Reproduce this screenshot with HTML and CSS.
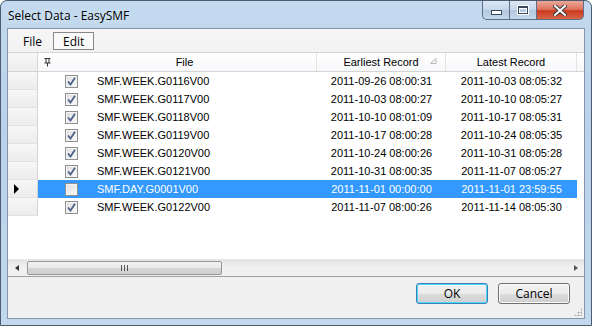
FILE: index.html
```html
<!DOCTYPE html>
<html lang="en">
<head>
    <meta charset="UTF-8">
    <title>Select Data - EasySMF</title>
    <link rel="stylesheet" href="styles.css">
</head>
<body>
    <div class="window">
        <!-- title bar -->
        <div class="titlebar">
            <div class="title">Select Data - EasySMF</div>
            <div class="caption">
                <div class="cap cap-min"><span class="glyph-min"></span></div>
                <div class="cap cap-max"><span class="glyph-max"></span></div>
                <div class="cap cap-close">
                    <svg width="14" height="11" viewBox="0 0 14 11">
                        <path d="M2 1 L12 10 M12 1 L2 10" stroke="#3b3b3b" stroke-width="4" stroke-linecap="square"/>
                        <path d="M2 1 L12 10 M12 1 L2 10" stroke="#fff" stroke-width="2" stroke-linecap="square"/>
                    </svg>
                </div>
            </div>
        </div>

        <div class="client">
            <div class="menubar">
                <div class="menu-item">File</div>
                <div class="menu-item active">Edit</div>
            </div>

            <div class="grid">
                <div class="grid-head">
                    <div class="rowhead"></div>
                    <div class="hcell h-pin">
                        <svg width="7" height="10" viewBox="0 0 7 10">
                            <path d="M0.5 1.5 H6.5 M2 1.5 V6 M5 1.5 V6 M0.5 6 H6.5 M3.5 6 V9.5" stroke="#333" stroke-width="1" fill="none"/>
                        </svg>
                    </div>
                    <div class="hcell h-file">File</div>
                    <div class="hcell h-early">Earliest Record
                        <svg class="sort" width="7" height="6" viewBox="0 0 7 6"><path d="M6 0.5 V5.5 H0.5 Z" fill="none" stroke="#b8b8b8"/></svg>
                    </div>
                    <div class="hcell h-late">Latest Record</div>
                    <div class="hcell h-rest"></div>
                </div>

                <div class="rows" id="rows"></div>
                <div class="grid-empty"></div>
            </div>

            <div class="hscroll">
                <div class="arrow-left"></div>
                <div class="thumb"><span class="grip"></span></div>
                <div class="track"></div>
                <div class="arrow-right"></div>
            </div>

            <div class="buttons">
                <button class="btn btn-ok">OK</button>
                <button class="btn">Cancel</button>
                <div class="sizegrip"></div>
            </div>
        </div>
    </div>

    <script>
        const data = [
            ['SMF.WEEK.G0116V00', '2011-09-26 08:00:31', '2011-10-03 08:05:32', true],
            ['SMF.WEEK.G0117V00', '2011-10-03 08:00:27', '2011-10-10 08:05:27', true],
            ['SMF.WEEK.G0118V00', '2011-10-10 08:01:09', '2011-10-17 08:05:31', true],
            ['SMF.WEEK.G0119V00', '2011-10-17 08:00:28', '2011-10-24 08:05:35', true],
            ['SMF.WEEK.G0120V00', '2011-10-24 08:00:26', '2011-10-31 08:05:28', true],
            ['SMF.WEEK.G0121V00', '2011-10-31 08:00:35', '2011-11-07 08:05:27', true],
            ['SMF.DAY.G0001V00', '2011-11-01 00:00:00', '2011-11-01 23:59:55', false],
            ['SMF.WEEK.G0122V00', '2011-11-07 08:00:26', '2011-11-14 08:05:30', true]
        ];
        const rows = document.getElementById('rows');
        data.forEach(function (d, i) {
            const selected = i === 6;
            const row = document.createElement('div');
            row.className = 'row' + (selected ? ' selected' : '');
            row.innerHTML =
                '<div class="rowhead">' + (selected ? '<span class="pointer"></span>' : '') + '</div>' +
                '<div class="cell c-check"><span class="checkbox' + (d[3] ? ' checked' : '') + '"></span></div>' +
                '<div class="cell c-file">' + d[0] + '</div>' +
                '<div class="cell c-early">' + d[1] + '</div>' +
                '<div class="cell c-late">' + d[2] + '</div>';
            rows.appendChild(row);
        });
        document.querySelectorAll('.checkbox.checked').forEach(function (c) {
            c.innerHTML = '<svg width="9" height="9" viewBox="0 0 9 9"><path d="M1 4.5 L3.5 7.5 L8 0.8" stroke="#4b5f8a" stroke-width="1.8" fill="none"/></svg>';
        });
    </script>
</body>
</html>
```

FILE: styles.css
```css
body {
    margin: 0;
    width: 592px;
    height: 326px;
    overflow: hidden;
    background: #fff;
}
.window {
    width: 592px;
    height: 326px;
    box-sizing: border-box;
    border: 1px solid #4d5b6d;
    border-radius: 7px 7px 0 0;
    background: linear-gradient(to bottom, #c3d9ef 0%, #b9d1ea 40%, #c2d8ee 100%);
    display: flex;
    flex-direction: column;
    padding: 0 6px 6px 6px;
    font-family: "Liberation Sans", Arial, sans-serif;
}

/* title bar */
.titlebar {
    height: 27px;
    flex: none;
    display: flex;
    justify-content: space-between;
    align-items: flex-start;
}
.title {
    font-family: "Open Sans", "Noto Sans", sans-serif;
    font-size: 12px;
    color: #000;
    padding: 6px 0 0 1px;
    text-shadow: 0 0 6px #e8f1fb;
}
.caption {
    display: flex;
    margin-right: 1px;
}
.cap {
    height: 19px;
    border: 1px solid #5d6f87;
    border-top: none;
    display: flex;
    align-items: center;
    justify-content: center;
    box-sizing: border-box;
}
.cap-min {
    width: 28px;
    border-radius: 0 0 0 5px;
    background: linear-gradient(to bottom, #dbe7f4 0%, #c6d7ea 50%, #b3c7de 51%, #c4d6ea 100%);
}
.cap-max {
    width: 27px;
    border-left: none;
    background: linear-gradient(to bottom, #dbe7f4 0%, #c6d7ea 50%, #b3c7de 51%, #c4d6ea 100%);
}
.cap-close {
    width: 47px;
    border-left: none;
    border-radius: 0 0 5px 0;
    background: linear-gradient(to bottom, #eba898 0%, #de7560 45%, #cc3a1f 55%, #db6446 100%);
}
.glyph-min {
    width: 9px;
    height: 3px;
    margin-top: 5px;
    background: #fff;
    border: 1px solid #39495d;
}
.glyph-max {
    width: 8px;
    height: 5px;
    background: transparent;
    border: 1px solid #39495d;
    box-shadow: inset 0 0 0 1px #fff, 0 0 0 1px #fff;
    border-top-width: 2px;
}

/* client area */
.client {
    flex: 1;
    min-height: 0;
    display: flex;
    flex-direction: column;
    background: #f0f0f0;
    border: 1px solid #8595ab;
}
.menubar {
    height: 23px;
    flex: none;
    display: flex;
    align-items: center;
    padding-left: 6px;
    background: linear-gradient(to bottom, #f6f6f6, #f2f2f2);
    border-bottom: 1px solid #d6d6d6;
    font-family: "Open Sans", "Noto Sans", sans-serif;
    font-size: 12px;
}
.menu-item {
    padding: 0 8px;
    height: 18px;
    line-height: 17px;
    margin-right: 2px;
    border: 1px solid transparent;
    box-sizing: border-box;
}
.menu-item.active {
    border-color: #888;
    background: #f9f9f9;
    padding: 0 9px;
}

/* grid */
.grid {
    flex: 1;
    min-height: 0;
    display: flex;
    flex-direction: column;
    background: #fff;
    font-size: 11px;
    color: #000;
}
.grid-head {
    height: 18px;
    flex: none;
    display: flex;
    border-bottom: 1px solid #d5d5d5;
    background: linear-gradient(to bottom, #ffffff, #f7f8fa);
}
.rowhead {
    width: 30px;
    flex: none;
    box-sizing: border-box;
    border-right: 1px solid #d5d5d5;
    background: linear-gradient(to bottom, #f7f7f7, #ececec);
    display: flex;
    align-items: center;
}
.hcell {
    display: flex;
    align-items: center;
    justify-content: center;
    box-sizing: border-box;
    border-right: 1px solid #e4e4e4;
    position: relative;
}
.h-pin {
    width: 15px;
    justify-content: flex-start;
    padding-left: 6px;
    border-right: none;
}
.h-file { width: 264px; }
.h-early { width: 129px; }
.h-late { width: 131px; }
.h-rest { flex: 1; border-right: none; }
.sort {
    position: absolute;
    right: 8px;
    top: 5px;
}

.row {
    height: 18px;
    display: flex;
    align-items: stretch;
}
.row .rowhead {
    border-bottom: 1px solid #e2e2e2;
}
.row.selected .cell {
    background: #3399ff;
    color: #fff;
}
.cell {
    display: flex;
    align-items: center;
    box-sizing: border-box;
}
.c-check { width: 54px; padding-left: 27px; }
.c-file { width: 225px; padding-left: 5px; }
.c-early { width: 129px; justify-content: center; }
.c-late { width: 131px; justify-content: center; }
.pointer {
    margin-left: 6px;
    width: 0;
    height: 0;
    border-top: 5px solid transparent;
    border-bottom: 5px solid transparent;
    border-left: 5px solid #000;
}
.checkbox {
    width: 13px;
    height: 13px;
    box-sizing: border-box;
    border: 1px solid #8e8f8f;
    background: linear-gradient(135deg, #dcdcdc, #fbfbfb);
    box-shadow: inset 0 0 0 1px #f4f4f4;
    display: flex;
    align-items: center;
    justify-content: center;
}
.grid-empty {
    flex: 1;
    border-bottom: 1px solid #e8e8e8;
}

/* horizontal scrollbar */
.hscroll {
    height: 17px;
    flex: none;
    display: flex;
    align-items: center;
    background: linear-gradient(to bottom, #e3e3e3, #f0f0f0 40%, #f0f0f0);
    border-bottom: 1px solid #a0a0a0;
    box-sizing: border-box;
}
.arrow-left {
    width: 0;
    height: 0;
    margin: 0 8px 0 7px;
    border-top: 3px solid transparent;
    border-bottom: 3px solid transparent;
    border-right: 4px solid #333;
}
.thumb {
    width: 195px;
    height: 14px;
    box-sizing: border-box;
    border: 1px solid #979797;
    border-radius: 2px;
    background: linear-gradient(to bottom, #f3f3f3, #e8e8e8 50%, #d6d6d6 51%, #cfcfcf);
    display: flex;
    align-items: center;
    justify-content: center;
}
.grip {
    width: 5px;
    height: 6px;
    border-left: 1px solid #555;
    border-right: 1px solid #555;
    position: relative;
}
.grip::after {
    content: "";
    position: absolute;
    left: 2px;
    top: 0;
    width: 1px;
    height: 6px;
    background: #555;
}
.track { flex: 1; }
.arrow-right {
    width: 0;
    height: 0;
    margin: 0 6px 0 8px;
    border-top: 3px solid transparent;
    border-bottom: 3px solid transparent;
    border-left: 4px solid #555;
}

/* buttons */
.buttons {
    height: 41px;
    flex: none;
    box-sizing: border-box;
    display: flex;
    justify-content: flex-end;
    align-items: flex-start;
    gap: 10px;
    padding: 6px 14px 0 0;
    position: relative;
}
.btn {
    width: 72px;
    height: 21px;
    font-family: "Open Sans", "Noto Sans", sans-serif;
    font-size: 12px;
    color: #000;
    border: 1px solid #707070;
    border-radius: 3px;
    background: linear-gradient(to bottom, #f2f2f2 0%, #ebebeb 50%, #dddddd 51%, #cfcfcf 100%);
    box-shadow: inset 0 0 0 1px #fbfbfb;
    padding: 0;
    line-height: 18px;
}
.btn-ok {
    border-color: #3c7fb1;
    box-shadow: inset 0 0 0 1px #48d8fb;
}
.sizegrip {
    position: absolute;
    right: 2px;
    bottom: 2px;
    width: 8px;
    height: 8px;
    background:
        radial-gradient(circle, #a8a8a8 0.8px, transparent 1.2px) 0 0 / 3px 3px;
    clip-path: polygon(100% 0, 100% 100%, 0 100%);
}
```
